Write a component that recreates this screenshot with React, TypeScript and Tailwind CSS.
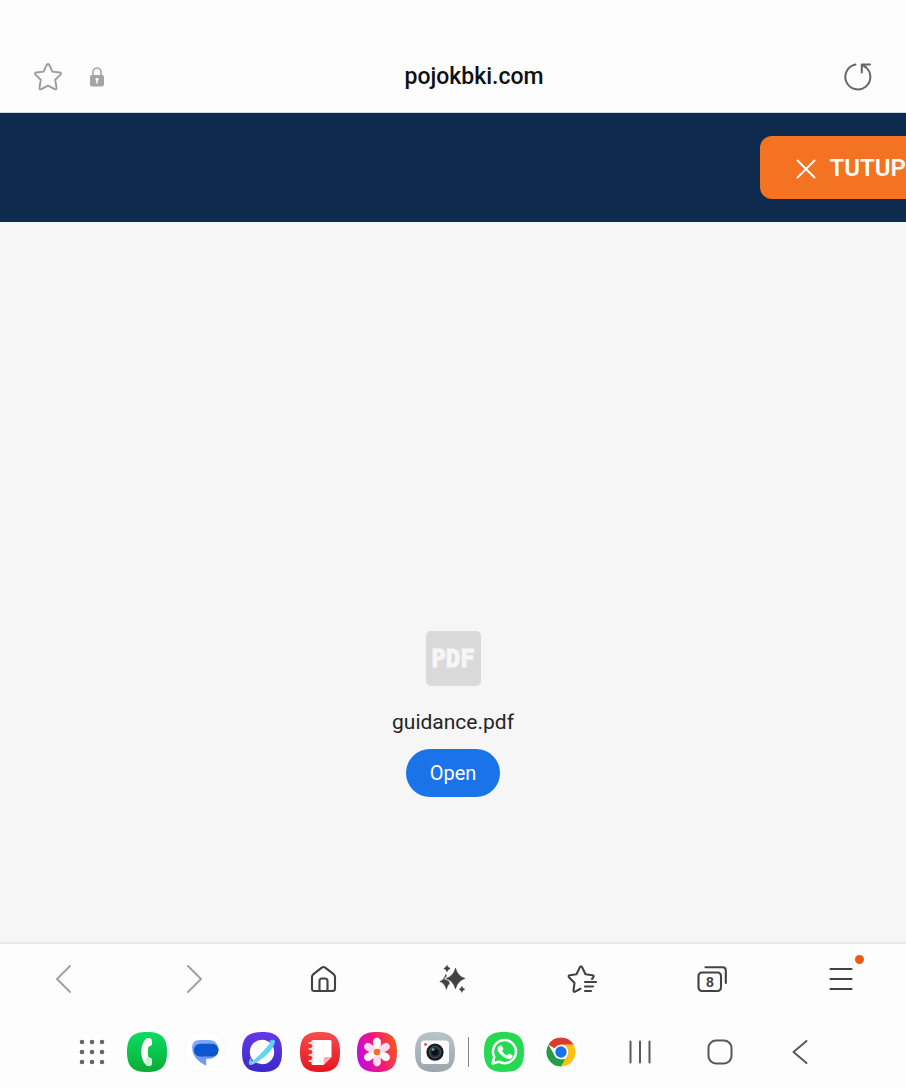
import type { ReactNode } from "react";

const SQUIRCLE = "M20 0C34.5 0 40 5.5 40 20S34.5 40 20 40 0 34.5 0 20 5.5 0 20 0Z";

function ToolButton({ label, className = "", children }: { label: string; className?: string; children: ReactNode }) {
  return (
    <button type="button" aria-label={label} className={`flex h-12 items-center justify-center ${className}`}>
      {children}
    </button>
  );
}

function AppButton({ label, children }: { label: string; children: ReactNode }) {
  return (
    <button type="button" aria-label={label} className="size-10 shrink-0">
      <svg viewBox="0 0 40 40" className="size-10">{children}</svg>
    </button>
  );
}

function AddressBar() {
  return (
    <header className="border-b border-[#d5dae0] pt-[42px]">
      <div className="flex h-[70px] items-center px-[34px]">
        <button type="button" aria-label="Bookmark" className="shrink-0">
          <svg viewBox="0 0 28 28" className="size-7" fill="none" stroke="#9c9c9c" strokeWidth="1.9" strokeLinejoin="round">
            <path d="M12.7 2q1.3-2 2.600 0l3.100 6.600 7.300.9q2.200.5.8 2.100l-5.300 5.100 1.300 8q.1 2.200-1.800 1.400L14 22.600l-6.700 3.500q-1.900.8-1.800-1.400l1.300-8-5.300-5.100Q.1 10 2.300 9.500l7.300-.9Z" />
          </svg>
        </button>
        <button type="button" aria-label="Site security" className="ml-7 shrink-0">
          <svg viewBox="0 0 14 20" className="h-5 w-[14px]">
            <path d="M3 10V5a4 4 0 0 1 8 0v5" fill="none" stroke="#a4a4a4" strokeWidth="1.6" />
            <rect x="0" y="8" width="14" height="11.5" rx="2" fill="#a4a4a4" />
            <circle cx="7" cy="12.2" r="1.5" fill="#fff" />
            <path d="M7 12v4.500" stroke="#fff" strokeWidth="1.4" />
          </svg>
        </button>
        <h1 className="flex-1 text-center text-[23px] font-medium leading-7 text-[#101010]">pojokbki.com</h1>
        <button type="button" aria-label="Reload" className="shrink-0">
          <svg viewBox="0 0 28 28" className="size-7" fill="none" stroke="#666" strokeWidth="2" strokeLinecap="round" strokeLinejoin="round">
            <path d="M11.500 1.600A12.500 12.500 0 1 0 21.500 4" />
            <path d="M17.800 9.500V1.400h8.200M18 1.600l4 2.800" />
          </svg>
        </button>
      </div>
    </header>
  );
}

function CloseBar() {
  return (
    <div className="flex justify-end overflow-hidden bg-[#0e2a4d] py-[23px]">
      <button type="button" className="-mr-9 flex h-[63px] shrink-0 items-center gap-[14px] rounded-xl bg-[#f47323] px-9 text-2xl font-semibold text-white">
        <svg viewBox="0 0 20 20" className="mt-[2px] size-5" stroke="#fff" strokeWidth="1.9" strokeLinecap="round">
          <path d="M1.500 1.500l17 17M18.500 1.500l-17 17" />
        </svg>
        TUTUP
      </button>
    </div>
  );
}

function PdfPanel() {
  return (
    <main className="flex flex-1 flex-col items-center justify-end bg-[#f6f6f6] pb-[145px]">
      <div className="flex size-[55px] items-center justify-center rounded-[5px] bg-[#dadada] font-['DejaVu_Sans_Mono',monospace] text-2xl font-bold text-[#f6f6f6] [-webkit-text-stroke:1px_#f6f6f6]">
        PDF
      </div>
      <p className="mt-5 text-[21px] leading-8 text-[#252525]">guidance.pdf</p>
      <button type="button" className="mt-[11px] h-12 rounded-full bg-[#1a73e8] px-6 text-xl text-white">Open</button>
    </main>
  );
}

function Toolbar() {
  return (
    <nav aria-label="Browser" className="grid grid-cols-7 items-center border-t-2 border-[#e8e8e8] pb-[13px] pt-[11px]">
      <ToolButton label="Back">
        <svg viewBox="0 0 18 30" className="h-[30px] w-[18px]" fill="none" stroke="#a0a0a0" strokeWidth="1.9" strokeLinecap="round" strokeLinejoin="round">
          <path d="M14 2L1 15l13 13" />
        </svg>
      </ToolButton>
      <ToolButton label="Forward">
        <svg viewBox="0 0 16 30" className="h-[30px] w-4" fill="none" stroke="#a0a0a0" strokeWidth="1.9" strokeLinecap="round" strokeLinejoin="round">
          <path d="M2 2l13 13L2 28" />
        </svg>
      </ToolButton>
      <ToolButton label="Home">
        <svg viewBox="0 0 28 28" className="size-7" fill="none" stroke="#424242" strokeWidth="2.1" strokeLinejoin="round">
          <path d="M2 12q0-1.800 1.400-2.900L11.800 2.600q1.700-1.200 3.400 0l8.400 6.500Q25 10.200 25 12v11.500Q25 26 22.500 26h-18Q2 26 2 23.500Z" />
          <path d="M9.500 26V16q0-2.500 2.500-2.500h3q2.500 0 2.500 2.500v10" />
        </svg>
      </ToolButton>
      <ToolButton label="Browsing assist">
        <svg viewBox="0 0 28 28" className="size-7" fill="#424242" stroke="#424242" strokeWidth=".5" strokeLinejoin="round">
          <path d="M16.500 3q2.200 8.300 9.600 10.500-7.400 2.200-9.600 10.500Q14.300 15.700 7 13.500 14.300 11.300 16.500 3Z" />
          <path d="M8 .3q.8 2.500 3.200 3.200Q8.800 4.200 8 6.900 7.200 4.200 4.800 3.500 7.200 2.800 8 .3ZM22.900 21.300q.7 2.400 2.900 3-2.200.6-2.900 3.100-.7-2.500-2.900-3.100 2.200-.6 2.900-3Z" />
          <path d="M6.800 9.300l.8 1.700-3 3 5 2 1 2.800Q8.700 19.800 7.300 24.500 5.800 18 .8 16.500q4.500-1.500 6-7.200Z" />
        </svg>
      </ToolButton>
      <ToolButton label="Bookmarks">
        <svg viewBox="0 0 30 30" className="size-[30px]" fill="none" stroke="#424242" strokeWidth="2.1" strokeLinecap="round" strokeLinejoin="round">
          <path d="M13.500 24.800l-5.300 2.800q-1.800.8-1.700-1.200l1-7.600-5.400-5.400q-1.300-1.600.7-2.100l6.700-1 3.300-6.900q1.200-2 2.400 0l3.300 6.900 7 1q2 .5.7 2.100L25 15" />
          <path d="M18 18h11M18 22.500h8M18 27h6" />
        </svg>
      </ToolButton>
      <ToolButton label="8 tabs">
        <span className="relative flex">
          <svg viewBox="0 0 30 28" className="h-7 w-[30px]" fill="none" stroke="#424242" strokeWidth="2.1" strokeLinecap="round">
            <rect x="1.500" y="7.500" width="22.500" height="18.500" rx="3.5" />
            <path d="M8.500 2.200h17q3.300 0 3.300 3.300v12.500" />
          </svg>
          <span className="absolute inset-x-0 top-[7px] pr-1 text-center font-['Liberation_Sans',sans-serif] text-sm font-bold leading-5 text-[#424242]">8</span>
        </span>
      </ToolButton>
      <ToolButton label="Menu">
        <span className="relative flex">
          <svg viewBox="0 0 24 24" className="size-6" stroke="#424242" strokeWidth="2.2" strokeLinecap="round">
            <path d="M1.500 2h21M1.500 12h21M1.500 22h21" />
          </svg>
          <span className="absolute -right-[11px] -top-3 size-[9px] rounded-full bg-[#ea5b17]" />
        </span>
      </ToolButton>
    </nav>
  );
}

function Dock() {
  return (
    <nav aria-label="Apps" className="flex h-[72px] items-center pl-[72px]">
      <ToolButton label="All apps" className="w-10">
        <svg viewBox="0 0 26 26" className="size-[26px]" fill="#666">
          {[3, 13, 23].map((y) => [3, 13, 23].map((x) => <circle key={`${x}-${y}`} cx={x} cy={y} r="2.3" />))}
        </svg>
      </ToolButton>
      <div className="ml-[15px] flex w-[328px] shrink-0 justify-between">
        <AppButton label="Phone">
          <defs>
            <linearGradient id="phone" x2="0" y2="1"><stop stopColor="#0bdc64" /><stop offset="1" stopColor="#0aad35" /></linearGradient>
          </defs>
          <path d={SQUIRCLE} fill="url(#phone)" />
          <path d="M20 6h2.500q1.800 0 2.200 2l.4 3.600q.1 1.500-1.300 2.100l-2.400 1q-1.300 5.300 0 10.600l2.400 1q1.400.6 1.300 2.100l-.4 3.600q-.4 2-2.200 2H20q-5.700-4.500-5.700-14T20 6Z" fill="#fff" />
          <path d="M19.500 26q1-1.500 2.300-.5l2 .8q1.400.6 1.300 2.100l-.4 3.600q-.4 2-2.200 2H20q-2.500-4.500-.5-8Z" fill="#c9f4d5" />
        </AppButton>
        <AppButton label="Messages">
          <path d={SQUIRCLE} fill="#fff" stroke="#f3f3f3" strokeWidth=".6" />
          <path d="M14.500 8h9.800q6.500 0 8.500 6L28 20H9q-2-2-2-4.500Q7 8 14.500 8Z" fill="#7da6f5" />
          <path d="M9 17h24.500q0 10-12.300 10v5.400q0 1.600-1.400.7Q8.500 27 7.300 18Z" fill="#6d9bf3" />
          <rect x="9" y="11.8" width="24.5" height="12.700" rx="6.200" fill="#0b57d0" />
        </AppButton>
        <AppButton label="Internet">
          <defs>
            <linearGradient id="planet" x2="0" y2="1"><stop stopColor="#6639e8" /><stop offset="1" stopColor="#3929cb" /></linearGradient>
            <linearGradient id="ring" x1="0" y1="1" x2="1" y2="0"><stop stopColor="#91bcfa" /><stop offset=".5" stopColor="#5dd7f4" /><stop offset="1" stopColor="#50ccfc" /></linearGradient>
          </defs>
          <path d={SQUIRCLE} fill="url(#planet)" />
          <circle cx="20" cy="20" r="12.2" fill="#fff" />
          <path d="M10 24C5.500 30 6.500 33.500 9 33c8-2 23-15 24-23 .4-3-3.200-2.800-7-.6 2.700-.4 3.300.6 2.600 2.200C26 18 17 27 11.700 29.300 9.500 30.200 8.500 28 10 24Z" fill="url(#ring)" />
          <path d="M9 31Q18 26 31 9" fill="none" stroke="#65d5f5" strokeWidth="2.2" />
        </AppButton>
        <AppButton label="Notes">
          <defs>
            <linearGradient id="notes" x2="0" y2="1"><stop stopColor="#f64d4c" /><stop offset="1" stopColor="#e51520" /></linearGradient>
          </defs>
          <path d={SQUIRCLE} fill="url(#notes)" />
          <path d="M13 8h17q1.500 0 1.500 1.500V25l-8 8H13q-1.500 0-1.500-1.500v-22Q11.500 8 13 8Z" fill="#fff" />
          <path d="M31.500 25l-8 8v-6q0-2 2-2Z" fill="#ffaeb3" />
          {[11, 17, 23, 29].map((y) => <path key={y} d={`M9.500 ${y}h4`} stroke="#fbd9da" strokeWidth="2" strokeLinecap="round" />)}
          {[14, 20, 26].map((y) => <circle key={y} cx="11.3" cy={y} r="1.2" fill="#ee3033" />)}
        </AppButton>
        <AppButton label="Gallery">
          <defs>
            <linearGradient id="gallery" x1="0" y1=".7" x2="1" y2=".4"><stop stopColor="#c40be5" /><stop offset=".5" stopColor="#ef1681" /><stop offset="1" stopColor="#fa5220" /></linearGradient>
          </defs>
          <path d={SQUIRCLE} fill="url(#gallery)" />
          {[0, 60, 120, 180, 240, 300].map((a) => (
            <path key={a} d="M20 20C15.500 14 15 6 20 6s4.500 8 0 14Z" transform={`rotate(${a} 20 20)`} fill={a % 120 === 0 ? "#fff" : "#ffdcef"} stroke={a % 120 === 0 ? "#fff" : "#ffdcef"} strokeWidth=".8" />
          ))}
          <circle cx="20" cy="20" r="3.2" fill="#f66c20" />
        </AppButton>
        <AppButton label="Camera">
          <defs>
            <linearGradient id="camera" x2="0" y2="1"><stop stopColor="#b9c3ca" /><stop offset="1" stopColor="#9ca6ad" /></linearGradient>
          </defs>
          <path d={SQUIRCLE} fill="url(#camera)" />
          <rect x="6" y="8.5" width="28" height="23.5" rx="3.5" fill="#fff" />
          <circle cx="10.5" cy="12.5" r="1.4" fill="#d65745" />
          <circle cx="20" cy="20.2" r="8.6" fill="#171b22" />
          <circle cx="20" cy="20.2" r="5.8" fill="#26303b" stroke="#48515b" />
          <circle cx="20" cy="20.2" r="3.3" fill="#0c1019" />
          <circle cx="18" cy="17.6" r="1.4" fill="#6aa0b8" />
        </AppButton>
      </div>
      <div className="ml-[13px] mr-[15px] h-[30px] w-px shrink-0 bg-[#858585]" />
      <div className="flex shrink-0 gap-[17px]">
        <AppButton label="WhatsApp">
          <path d={SQUIRCLE} fill="#25d950" />
          <path d="M8.500 31.500l1.800-6.500a11.500 11.500 0 1 1 4.600 4.700Z" fill="none" stroke="#fff" strokeWidth="2.5" strokeLinejoin="round" />
          <path d="M15.800 13.500h1.500q.6 0 .9.7l1.100 2.600q.2.500-.2 1l-1.100 1.300q1.800 3.200 5 4.500l1.500-1.700q.4-.5 1-.2l2.700 1.300q.6.300.5.900-.4 3.100-3.600 3.300-3.800-.2-7.400-3.600-3.800-3.500-4.200-6.300-.2-2.300 2.300-3.800Z" fill="#fff" />
        </AppButton>
        <AppButton label="Chrome">
          <path d={SQUIRCLE} fill="#fff" stroke="#f5f5f5" strokeWidth=".6" />
          <path d="M20 20L7.440 12.750A14.500 14.500 0 0 1 32.560 12.750L20 12.750Z" fill="#dd3b2f" />
          <path d="M20 12.750h12.560A14.500 14.500 0 0 1 20 34.500l6.280-10.880Z" fill="#fbc116" />
          <path d="M7.440 12.750l6.280 10.870L20 27.250h4.200L20 34.500A14.500 14.500 0 0 1 7.440 12.750Z" fill="#279b48" />
          <circle cx="20" cy="20" r="7.25" fill="#fff" />
          <circle cx="20" cy="20" r="5.7" fill="#1b72e8" />
        </AppButton>
      </div>
      <div className="ml-[39px] flex gap-10">
        <ToolButton label="Recent apps" className="w-10">
          <svg viewBox="0 0 24 24" className="size-6" stroke="#595959" strokeWidth="2" strokeLinecap="round">
            <path d="M2.500 1.500v21M12 1.500v21M21.500 1.500v21" />
          </svg>
        </ToolButton>
        <ToolButton label="Home screen" className="w-10">
          <svg viewBox="0 0 26 26" className="size-[26px]" fill="none" stroke="#595959" strokeWidth="2">
            <rect x="1.5" y="1.5" width="23" height="23" rx="7.5" />
          </svg>
        </ToolButton>
        <ToolButton label="System back" className="w-10">
          <svg viewBox="0 0 16 26" className="h-[26px] w-4" fill="none" stroke="#595959" strokeWidth="2" strokeLinecap="round" strokeLinejoin="round">
            <path d="M14.500 2L1.500 13l13 11" />
          </svg>
        </ToolButton>
      </div>
    </nav>
  );
}

export default function App() {
  return (
    <div className="flex min-h-screen flex-col overflow-x-hidden bg-[#fdfdfd] font-['Roboto',sans-serif]">
      <AddressBar />
      <CloseBar />
      <PdfPanel />
      <Toolbar />
      <Dock />
    </div>
  );
}
